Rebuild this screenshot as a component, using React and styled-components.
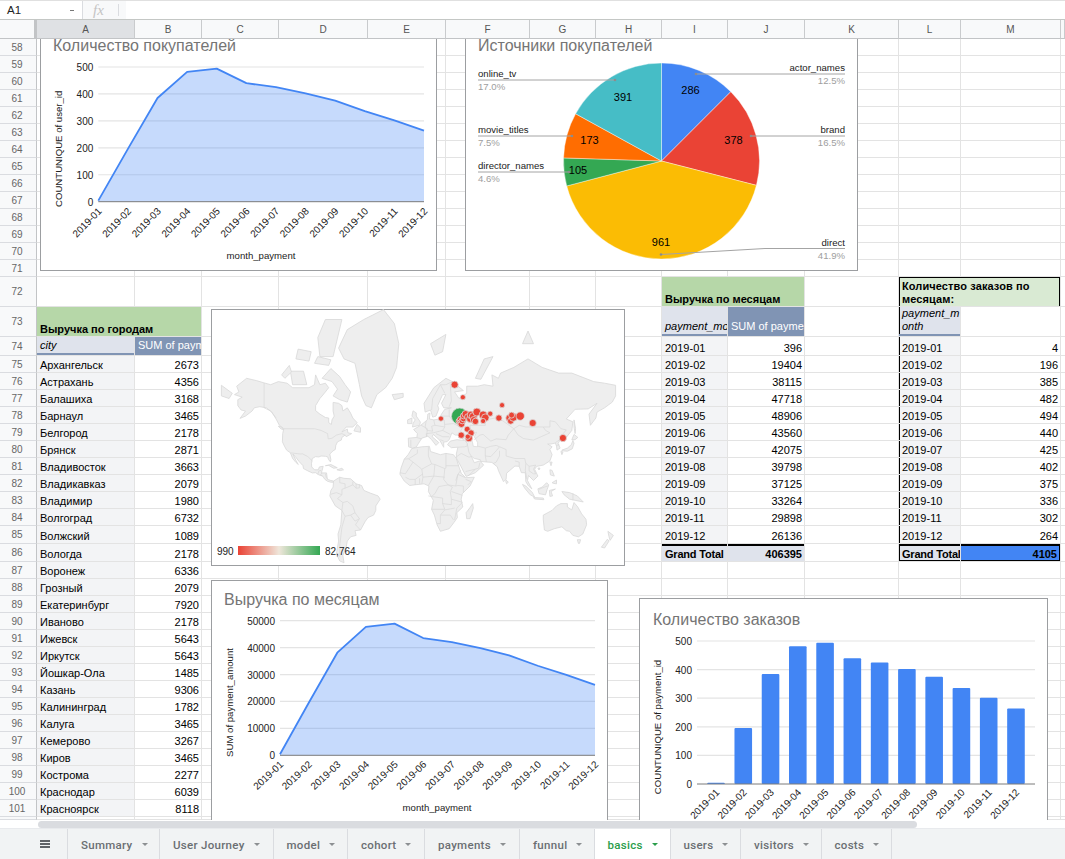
import React from "react";
import styled, { createGlobalStyle } from "styled-components";

const GlobalStyle = createGlobalStyle`
  html, body { margin: 0; padding: 0; background: #fff; }
  body { font-family: "Liberation Sans", Arial, sans-serif; }
`;

const COLUMNS = [
  ["A", 98], ["B", 67], ["C", 77], ["D", 89], ["E", 78], ["F", 84], ["G", 66],
  ["H", 66], ["I", 66], ["J", 77], ["K", 94], ["L", 62], ["M", 100], ["N", 4],
];
const TRACKS = `37px ${COLUMNS.map(c => c[1] + "px").join(" ")}`;

const rowHeight = n => {
  if (n === 72 || n === 73) return 30;
  if (n === 74) return 19;
  if (n === 85 || n === 86) return 18;
  if (n === 102) return 3;
  return 17;
};
const ROWS = Array.from({ length: 45 }, (_, i) => 58 + i);

const CITIES = [
  ["Архангельск", 2673], ["Астрахань", 4356], ["Балашиха", 3168], ["Барнаул", 3465],
  ["Белгород", 2178], ["Брянск", 2871], ["Владивосток", 3663], ["Владикавказ", 2079],
  ["Владимир", 1980], ["Волгоград", 6732], ["Волжский", 1089], ["Вологда", 2178],
  ["Воронеж", 6336], ["Грозный", 2079], ["Екатеринбург", 7920], ["Иваново", 2178],
  ["Ижевск", 5643], ["Иркутск", 5643], ["Йошкар-Ола", 1485], ["Казань", 9306],
  ["Калининград", 1782], ["Калуга", 3465], ["Кемерово", 3267], ["Киров", 3465],
  ["Кострома", 2277], ["Краснодар", 6039], ["Красноярск", 8118],
];
const MONTHS = ["2019-01", "2019-02", "2019-03", "2019-04", "2019-05", "2019-06", "2019-07", "2019-08", "2019-09", "2019-10", "2019-11", "2019-12"];
const REVENUE = [396, 19404, 38115, 47718, 48906, 43560, 42075, 39798, 37125, 33264, 29898, 26136];
const ORDERS = [4, 196, 385, 482, 494, 440, 425, 402, 375, 336, 302, 264];

// every filled cell of the sheet, keyed by address
const buildCells = () => {
  const c = {};
  c.A73 = { text: "Выручка по городам", kind: "banner", span: 2 };
  c.A74 = { text: "city", kind: "field", rule: true };
  c.B74 = { text: "SUM of payment_amount", kind: "measure", rule: true };
  CITIES.forEach(([name, sum], i) => {
    c[`A${75 + i}`] = { text: name, kind: "label" };
    c[`B${75 + i}`] = { text: sum, kind: "number" };
  });

  c.I72 = { text: "Выручка по месяцам", kind: "banner", span: 2 };
  c.I73 = { text: "payment_month", kind: "field", rule: true };
  c.J73 = { text: "SUM of payment_amount", kind: "measure", rule: true };
  MONTHS.forEach((m, i) => {
    c[`I${74 + i}`] = { text: m, kind: "label" };
    c[`J${74 + i}`] = { text: REVENUE[i], kind: "number" };
    c[`L${74 + i}`] = { text: m, kind: "label", frame: "l" };
    c[`M${74 + i}`] = { text: ORDERS[i], kind: "number" };
  });
  c.I86 = { text: "Grand Total", kind: "total", heavy: true };
  c.J86 = { text: 406395, kind: "totalNumber", heavy: true };

  c.L72 = { text: "Количество заказов по месяцам:", kind: "note", span: 2, frame: "tlr" };
  c.L73 = { text: "payment_month", kind: "fieldWrap", rule: true, frame: "l" };
  c.L86 = { text: "Grand Total", kind: "total", heavy: true, frame: "lb" };
  c.M86 = { text: 4105, kind: "accent", heavy: true, frame: "rb" };
  return c;
};
const CELLS = buildCells();

const KIND_STYLES = {
  banner: `background:#b6d7a8;font-weight:700;`,
  note: `background:#d9ead3;font-weight:700;white-space:normal;line-height:13px;letter-spacing:.1px;`,
  field: `background:#dfe3ec;font-style:italic;padding-bottom:3px;`,
  fieldWrap: `background:#dfe3ec;font-style:italic;white-space:normal;word-break:break-all;line-height:13px;padding:0 0 3px 3px;`,
  measure: `background:#8094b4;color:#fff;padding-bottom:3px;`,
  label: `background:#f3f4f6;`,
  number: `justify-content:flex-end;padding-right:2px;`,
  total: `background:#dfe3ec;font-weight:700;padding-right:0;letter-spacing:-.2px;`,
  totalNumber: `background:#dfe3ec;font-weight:700;justify-content:flex-end;padding-right:2px;`,
  accent: `background:#4285f4;font-weight:700;justify-content:flex-end;padding-right:3px;`,
};

const cellShadow = ({ $rule, $heavy, $frame = "" }) => {
  const s = [];
  if ($rule) s.push("inset 0 -2px 0 #8094b4");
  if ($heavy) s.push("inset 0 2px 0 #000");
  if ($frame.includes("t")) s.push("inset 0 1px 0 #000");
  if ($frame.includes("l")) s.push("inset 1px 0 0 #000");
  if ($frame.includes("r")) s.push("inset -1px 0 0 #000");
  if ($frame.includes("b")) s.push("inset 0 -1px 0 #000");
  return s.length ? `box-shadow:${s.join(",")};` : "";
};

const Page = styled.div`
  width: 1065px;
  height: 859px;
  display: flex;
  flex-direction: column;
  overflow: hidden;
  background: #fff;
  color: #000;
`;

const FormulaBar = styled.div`
  height: 20px;
  flex: none;
  box-sizing: border-box;
  display: flex;
  align-items: stretch;
  border-top: 1px solid #e0e0e0;
  border-bottom: 1px solid #c4c7c5;
  font-size: 11.5px;
`;

const NameBox = styled.div`
  width: 83px;
  box-sizing: border-box;
  padding: 0 7px;
  display: flex;
  align-items: center;
  justify-content: space-between;
  border-right: 1px solid #dadce0;
  color: #222;
`;

const NameCaret = styled.span`
  width: 4px;
  height: 1px;
  background: #777;
  margin-right: 1px;
`;

const FxBox = styled.div`
  width: 43px;
  box-sizing: border-box;
  padding-left: 10px;
  display: flex;
  align-items: center;
  background: #f8f9fa;
  color: #c4c4c4;
  font: italic 15px "Liberation Serif", serif;
  position: relative;
  &::after {
    content: "";
    position: absolute;
    right: 7px;
    top: 3px;
    bottom: 3px;
    width: 1px;
    background: #dadce0;
  }
`;

const HeaderRow = styled.div`
  flex: none;
  height: 19px;
  display: grid;
  grid-template-columns: ${TRACKS};
`;

const Corner = styled.div`
  background: #f8f9fa;
  border-right: 3px solid #c2c4c6;
  border-bottom: 1px solid #c2c4c6;
  box-sizing: border-box;
`;

const ColumnHead = styled.div`
  display: flex;
  align-items: center;
  justify-content: center;
  box-sizing: border-box;
  font-size: 10px;
  color: #555;
  background: ${p => (p.$selected ? "#dfe1e4" : "#f8f9fa")};
  border-right: 1px solid #c9cbcd;
  border-bottom: 1px solid #c2c4c6;
`;

const Body = styled.div`
  flex: none;
  height: 781px;
  position: relative;
  overflow: hidden;
`;

const SheetGrid = styled.div`
  display: grid;
  grid-template-columns: ${TRACKS};
  grid-template-rows: ${ROWS.map(n => rowHeight(n) + "px").join(" ")};
`;

const RowHead = styled.div`
  display: flex;
  align-items: center;
  justify-content: center;
  box-sizing: border-box;
  padding-right: 2px;
  font-size: 10px;
  color: #666;
  background: #f8f9fa;
  border-right: 1px solid #c2c4c6;
  border-bottom: 1px solid #dadce0;
`;

const Cell = styled.div`
  box-sizing: border-box;
  min-width: 0;
  overflow: hidden;
  display: flex;
  align-items: flex-end;
  padding: 0 3px;
  font-size: 11px;
  line-height: 14px;
  white-space: nowrap;
  border-right: 1px solid #e3e3e3;
  border-bottom: 1px solid #e3e3e3;
  grid-column: span ${p => p.$span || 1};
  ${p => KIND_STYLES[p.$kind] || ""}
  ${cellShadow}
`;

const ChartFrame = styled.div`
  position: absolute;
  left: ${p => p.$x}px;
  top: ${p => p.$y - 39}px;
  width: ${p => p.$w}px;
  height: ${p => p.$h}px;
  background: #fff;
  box-shadow: inset 0 0 0 1px #9c9ea1;
`;

const ChartCanvas = styled.svg`
  position: absolute;
  inset: 0;
  width: 100%;
  height: 100%;
  display: block;
`;

const ChartTitle = styled.text`
  font: 16px "Liberation Sans", Arial, sans-serif;
  fill: #757575;
`;

const AxisText = styled.text`
  font: 10px "Liberation Sans", Arial, sans-serif;
  fill: #222;
`;

const AxisTitle = styled.text`
  font: 9.6px "Liberation Sans", Arial, sans-serif;
  fill: #222;
  text-anchor: middle;
`;

const PieValue = styled.text`
  font: 11px "Liberation Sans", Arial, sans-serif;
  fill: #000;
  text-anchor: middle;
`;

const LegendName = styled.text`
  font: 9.6px "Liberation Sans", Arial, sans-serif;
  fill: #222;
`;

const LegendShare = styled.text`
  font: 9.6px "Liberation Sans", Arial, sans-serif;
  fill: #9e9e9e;
`;

const Track = styled.div`
  flex: none;
  height: 9px;
  box-sizing: border-box;
  padding: 1px 0 0 38px;
  background: #fff;
  border-bottom: 1px solid #e8eaed;
`;

const Thumb = styled.div`
  width: 879px;
  height: 7px;
  border-radius: 4px;
  background: #dadce0;
`;

const TabBar = styled.div`
  flex: 1;
  display: flex;
  align-items: stretch;
  background: #f1f3f4;
`;

const MenuButton = styled.div`
  width: 68px;
  box-sizing: border-box;
  border-right: 1px solid #dadce0;
  display: flex;
  flex-direction: column;
  align-items: center;
  justify-content: center;
  gap: 1px;
  padding-left: 22px;
  & > span {
    width: 10px;
    height: 2px;
    background: #5f6368;
  }
`;

const Tab = styled.div`
  box-sizing: border-box;
  width: ${p => p.$w}px;
  padding: 1px 0 0 13px;
  display: flex;
  align-items: center;
  gap: 9px;
  border-right: 1px solid #dadce0;
  font: 500 11.5px Roboto, "Liberation Sans", sans-serif;
  letter-spacing: 0.3px;
  color: ${p => (p.$active ? "#2a9d4a" : "#6a6e72")};
  background: ${p => (p.$active ? "#fff" : "transparent")};
  white-space: nowrap;
`;

const TabCaret = styled.span`
  width: 0;
  height: 0;
  border-left: 3.5px solid transparent;
  border-right: 3.5px solid transparent;
  border-top: 3.5px solid currentColor;
  opacity: ${p => (p.$active ? 1 : 0.75)};
`;

const range = (a, b, n) => Array.from({ length: n }, (_, i) => a + ((b - a) * i) / (n - 1));

const Frame = ({ x, y, w, h, title, titleX, titleY, children }) => (
  <ChartFrame $x={x} $y={y} $w={w} $h={h}>
    <ChartCanvas viewBox={`${x} ${y} ${w} ${h}`}>
      {title && <ChartTitle x={titleX} y={titleY}>{title}</ChartTitle>}
      {children}
    </ChartCanvas>
  </ChartFrame>
);

const Axes = ({ plot, ticks, max, yLabel, yLabelX, xLabel, xLabelX, xLabelY, labelXs, labelDx, labelDy, angle }) => {
  const toY = v => plot.bottom - (v / max) * (plot.bottom - plot.top);
  return (
    <g>
      {ticks.map(t => (
        <g key={t}>
          {t > 0 && <line x1={plot.left} x2={plot.right} y1={toY(t)} y2={toY(t)} stroke="#e4e4e4" strokeWidth="1.2" />}
          <AxisText x={plot.left - 5} y={toY(t) + 4} textAnchor="end">{t}</AxisText>
        </g>
      ))}
      <AxisTitle transform={`translate(${yLabelX} ${(plot.top + plot.bottom) / 2 + 14.5}) rotate(-90)`}>
        {yLabel}
      </AxisTitle>
      {MONTHS.map((m, i) => (
        <AxisText
          key={m}
          textAnchor="end"
          transform={`translate(${labelXs[i] + labelDx} ${plot.bottom + labelDy}) rotate(${angle})`}
        >
          {m}
        </AxisText>
      ))}
      {xLabel && <AxisTitle x={xLabelX} y={xLabelY}>{xLabel}</AxisTitle>}
    </g>
  );
};

const AreaChart = ({ frame, plot, data, max, ticks, ...axes }) => {
  const xs = range(plot.left, plot.right, 12);
  const pts = data.map((v, i) => `${xs[i]},${plot.bottom - (v / max) * (plot.bottom - plot.top)}`);
  return (
    <Frame {...frame}>
      <Axes plot={plot} ticks={ticks} max={max} labelXs={xs} {...axes} />
      <polygon
        points={`${plot.left},${plot.bottom} ${pts.join(" ")} ${plot.right},${plot.bottom}`}
        fill="#4285f4"
        fillOpacity="0.3"
      />
      <polyline points={pts.join(" ")} fill="none" stroke="#4285f4" strokeWidth="1.8" strokeLinejoin="round" />
      <line x1={plot.left} x2={plot.right} y1={plot.bottom} y2={plot.bottom} stroke="#7b7b7b" />
    </Frame>
  );
};

const BarChart = ({ frame, plot, data, max, ticks, ...axes }) => {
  const centers = data.map((_, i) => 716 + i * 27.27);
  return (
    <Frame {...frame}>
      <Axes plot={plot} ticks={ticks} max={max} labelXs={centers} {...axes} />
      {data.map((v, i) => {
        const h = (v / max) * (plot.bottom - plot.top);
        return <rect key={i} x={centers[i] - 8.8} y={plot.bottom - h} width="17.6" height={h} rx="1" fill="#4285f4" />;
      })}
      <line x1={plot.left} x2={plot.right} y1={plot.bottom} y2={plot.bottom} stroke="#7b7b7b" />
    </Frame>
  );
};

const PIE = { cx: 661.5, cy: 161, r: 98 };
const SLICES = [
  { share: 12.5, color: "#4285f4", value: 286, vx: 690.5, vy: 94, name: "actor_names", pct: "12.5%", right: true, line: [[696, 74], [845, 74]] },
  { share: 16.5, color: "#ea4335", value: 378, vx: 733.5, vy: 144, name: "brand", pct: "16.5%", right: true, line: [[751, 136], [845, 136]] },
  { share: 41.9, color: "#fbbc04", value: 961, vx: 661, vy: 246, name: "direct", pct: "41.9%", right: true, line: [[661, 254.5], [765, 248.5], [845, 248.5]] },
  { share: 4.6, color: "#34a853", value: 105, vx: 578, vy: 174, name: "director_names", pct: "4.6%", line: [[569, 172], [478, 172]] },
  { share: 7.5, color: "#ff6d01", value: 173, vx: 589.5, vy: 144, name: "movie_titles", pct: "7.5%", line: [[572, 136], [478, 136]] },
  { share: 17.0, color: "#46bdc6", value: 391, vx: 623, vy: 100.5, name: "online_tv", pct: "17.0%", line: [[615, 80], [478, 80]] },
];

const slicePath = (from, to) => {
  const p = s => {
    const a = (s / 100) * 2 * Math.PI - Math.PI / 2;
    return `${PIE.cx + PIE.r * Math.cos(a)} ${PIE.cy + PIE.r * Math.sin(a)}`;
  };
  return `M${PIE.cx} ${PIE.cy}L${p(from)}A${PIE.r} ${PIE.r} 0 ${to - from > 50 ? 1 : 0} 1 ${p(to)}Z`;
};

const PieChart = ({ frame }) => {
  let at = 0;
  return (
    <Frame {...frame}>
      {SLICES.map(s => {
        const d = slicePath(at, at + s.share);
        at += s.share;
        return <path key={s.name} d={d} fill={s.color} stroke="#fff" strokeWidth="0.4" />;
      })}
      {SLICES.map(s => {
        const end = s.line[s.line.length - 1];
        const anchor = s.right ? "end" : "start";
        return (
          <g key={s.name}>
            <PieValue x={s.vx} y={s.vy}>{s.value}</PieValue>
            <polyline points={s.line.map(p => p.join(",")).join(" ")} fill="none" stroke="#a4a4a4" />
            <circle cx={s.line[0][0]} cy={s.line[0][1]} r="1.3" fill="#8c8c8c" />
            <LegendName x={end[0]} y={end[1] - 3} textAnchor={anchor}>{s.name}</LegendName>
            <LegendShare x={end[0]} y={end[1] + 10} textAnchor={anchor}>{s.pct}</LegendShare>
          </g>
        );
      })}
    </Frame>
  );
};

// mercator, calibrated on the sheet's map chart
const px = lon => 418.5 + 1.095 * lon;
const py = lat => 490.4 - 62.7 * Math.log(Math.tan(Math.PI / 4 + (lat * Math.PI) / 360));
const project = pts => pts.map(([lon, lat]) => `${px(lon).toFixed(1)},${py(lat).toFixed(1)}`).join(" ");

const LAND = [
  [[-168,65.5],[-164,66.5],[-166,68.5],[-157,71],[-148,70.3],[-141,69.6],[-135,69],[-128,70],[-120,69.5],[-115,68],[-108,68],[-100,68],[-95,69],[-94,72],[-90,69],[-85,69.5],[-82,68],[-86,66],[-90,64],[-94,61],[-94,58.7],[-90,57],[-85,55.3],[-82,55],[-82,52.5],[-79.5,51.5],[-79,54],[-77,56],[-78,58.5],[-78,62.4],[-73,62],[-70,61],[-69,58.5],[-65,60],[-62,57.5],[-60,55],[-56,52.5],[-60,50],[-66,50],[-70,47],[-65,48.8],[-64.5,46.5],[-61,46],[-66,44],[-67,45],[-70,43.5],[-70.5,41.7],[-74,40.5],[-75.5,38],[-76,35],[-78,34],[-81,31.5],[-80,27],[-80.5,25.2],[-82,27],[-83,29.3],[-85,29.7],[-89,30],[-91,29.2],[-94,29.5],[-97,28],[-97.7,24],[-97.5,21],[-95,18.5],[-91.5,18.5],[-90.5,21],[-87,21.5],[-88,18],[-88.8,15.8],[-84,15.8],[-83.5,12],[-83,10],[-80,9],[-77.5,8.6],[-78,7.5],[-80,7.5],[-83,8.3],[-85.5,10],[-87.5,13],[-91,14],[-94,16],[-97,15.8],[-101,17.5],[-105,19.5],[-105.5,22],[-109,25.5],[-112.5,29.5],[-114.7,31.5],[-112,26.5],[-109.8,23],[-112,24.8],[-115,28],[-117,32.5],[-120.5,34.5],[-122.5,37.5],[-124.3,40.5],[-124,46],[-123,49],[-127,51],[-130,54.5],[-134,58],[-139,60],[-145,60.5],[-150,60],[-152,58.5],[-158,56],[-163,54.8],[-158,58.5],[-162,59],[-165,61],[-165,63.5],[-161,64.5]],
  [[-73,78.2],[-65,81.2],[-50,82.5],[-32,83.6],[-22,82],[-18,79],[-20,74],[-24,71],[-30,68],[-38,65.5],[-43,60],[-48,61],[-52,65],[-54,69],[-58,75],[-68,76]],
  [[-80,73.7],[-72,71.5],[-67,69],[-62,66.5],[-65,62.5],[-72,63.5],[-78,65],[-74,67.5],[-79,70],[-88,71]],
  [[-117,73],[-105,73],[-102,69],[-115,69]],
  [[-90,76.5],[-78,76.5],[-70,82.5],[-85,82.5],[-92,80]],
  [[-125,72],[-118,74.5],[-116,72.8],[-122,71]],
  [[-95,75],[-82,74.5],[-80,75.8],[-92,76.5]],
  [[-112,76],[-100,75.5],[-98,77.5],[-110,78]],
  [[-59,47.7],[-53,46.8],[-53,49.5],[-56,51.5]],
  [[-85,22],[-80,23],[-74.2,20.2],[-77.5,19.9],[-82,22.3]],
  [[-74.5,18.5],[-70,19.8],[-68.5,18.5],[-71.5,17.8]],
  [[-128,50.5],[-125,50],[-123.5,48.5],[-125.5,48.8]],
  [[-77.5,8.6],[-72,12],[-68,11],[-62,10.5],[-57,6],[-52,4.5],[-50,0],[-44,-2.5],[-37,-5],[-35,-8],[-39,-14],[-39,-18],[-41,-22],[-46,-24],[-48.5,-27],[-53,-34],[-58,-34.5],[-57,-38],[-62,-39],[-65,-42],[-66,-46],[-69,-51],[-68,-55],[-72,-54],[-75,-50],[-73,-42],[-73.5,-37],[-71,-30],[-70,-18],[-76,-14],[-81,-5],[-80,0],[-78,3]],
  [[-6,35.8],[3,37],[10,37.3],[11,33.5],[20,31],[25,32],[32,31],[34.5,28],[37,21],[39,15.5],[43,11.5],[51,12],[47,4],[40,-3],[39,-8],[40.5,-15],[35,-20],[35.5,-24],[32.5,-28],[28,-33],[20,-35],[17,-30],[14.5,-22],[12,-17],[13.5,-9],[9,-1],[9.5,4],[5,6],[-4,5],[-8,4.5],[-13,8.5],[-17,14.7],[-16,20],[-13,27.5],[-9.5,31]],
  [[-9,37],[-9.3,43],[-1.5,43.5],[-1,46],[-4.5,48.5],[2,51],[8,54],[8.5,57],[10.5,57.5],[10,54.5],[14,54],[19,54.5],[21,57],[24,59.3],[30,60],[23,60],[21,62],[25,65.5],[22,65.5],[17.5,61],[18.5,59.5],[16,56],[13,55.5],[11,59],[6,58],[5,62],[14,68],[25,71],[31,70],[41,67],[33,66.5],[37,64],[44,66],[44,68.5],[54,68.5],[60,69],[68,68.5],[67,72],[73,71],[75,72.5],[87,74],[100,76],[113,74],[128,72.5],[140,72.5],[160,70],[170,69.5],[180,68.8],[180,65],[177,62.5],[170,60],[163,58],[162,55],[157,51],[155.7,57],[163,62],[155,59.5],[143,59.3],[135,54.5],[141,53],[140,48],[135,43.5],[130,42.5],[127.5,39.5],[129.3,36],[126.5,34.5],[126,37.5],[125,39.7],[121,39],[118,39],[122,37],[120,35],[122,31],[120,26],[114,22.5],[108,21.5],[106,19],[109,13],[105,9],[100.5,13.5],[99.5,9],[103.5,1.5],[100.5,4],[98,8],[97.5,16],[94,16],[92,21.5],[88,21.7],[80.5,15.5],[80,10],[77.5,8],[73,18],[72,21],[67,24.8],[57,25.5],[56.5,27],[51,28],[48,30],[51,24.5],[56,26],[59.5,22.5],[52,16],[43.5,12.7],[39,21],[34.8,28],[34.5,31.5],[36,36.7],[30,36.3],[26.5,38.5],[29,41],[35,42],[41.5,41.5],[37,45],[33.5,45],[30.5,46.5],[28,42],[26,40.7],[23,40.3],[23,36.6],[19.5,41.5],[13.5,45.5],[12.5,44],[18.5,40],[16,38],[12,42],[8.5,44.3],[3,43],[0,39.5],[-2,36.8],[-5.5,36]],
  [[-180,68.8],[-170,66],[-173,64],[-180,65]],
  [[-5.5,50],[1,51],[1.7,52.8],[-2,56],[-2,57.6],[-5,58.6],[-6,56],[-3,54],[-5,52]],
  [[-10,52],[-6,52],[-6,55],[-10,54]],
  [[-24,65.5],[-14,66],[-14,64.5],[-22,63.5]],
  [[11,79],[25,80.5],[22,77.5],[15,76.8]],
  [[52,71],[57,70.7],[68,76.5],[60,76]],
  [[95,79],[105,79],[100,81]],
  [[142,54],[143.5,49],[143,46],[142,50]],
  [[131,34],[136,33.7],[140.5,35.5],[142,39.5],[141,41.5],[139.5,38.5],[136,36],[131,34.5]],
  [[140,42],[143,42],[145.5,43.5],[142,45.5]],
  [[130,33.5],[132,33],[131,31]],
  [[120,25],[122,25],[121,22]],
  [[109,20],[111,20],[110,18.3]],
  [[80,9.5],[82,7.5],[80.5,6],[79.7,8]],
  [[49.5,-12],[50,-16],[47,-25],[44,-25],[43.5,-20],[47,-15.5]],
  [[95,5.5],[98,4],[104,-2],[106,-6],[102,-4],[97,2]],
  [[105,-6.5],[114,-7],[114.5,-8.5],[106,-7.8]],
  [[109,1.5],[113,3],[117,7],[119,5],[117.5,1],[116,-4],[110,-3]],
  [[119.5,0],[125,1.3],[121,-1],[122.5,-5],[120,-5.5]],
  [[131,-1],[138,-2],[145,-5],[150.5,-10.5],[143,-9],[138,-8],[133,-4]],
  [[120,18.5],[122,18],[124,13],[120.5,14]],
  [[122,7],[126,9.5],[126,6],[123,6.5]],
  [[114,-22],[122,-18],[126,-14],[130,-12],[136,-12],[136,-15],[140,-17.5],[142,-11],[145.5,-15],[149,-21],[153,-25.5],[153.5,-30],[150,-37],[146,-39],[141,-38],[138,-35],[135,-34.5],[131,-31.5],[124,-33],[118,-35],[115,-34],[114,-26]],
  [[145,-41],[148,-41],[147,-43.5],[146,-43.5]],
  [[173,-35],[178,-38],[175,-41.5],[174,-39]],
  [[172.5,-40.7],[174,-42],[170,-46.5],[167,-46]],
];

const LAKES = [[[47,45],[53,46.8],[51,44],[54,40],[54,37],[50,37.3],[49,41]]];

const BORDERS = [
  [[-123,49],[-95,49],[-89,48],[-83,46],[-82.5,42.5],[-79,43],[-75,45],[-70,46],[-67,45]],
  [[-141,69.6],[-141,60],[-135,58.5],[-130,55]],
  [[-117,32.5],[-108,31.5],[-106,31.7],[-101,29.5],[-97,26]],
  [[-92,14.5],[-91,17.5],[-89,18]],[[-88,15.8],[-89.5,14],[-87.5,13]],[[-85,15],[-84,11]],
  [[-70,-18],[-69,-11],[-74,-7.5],[-70,-4],[-70,1],[-67,2],[-60,5]],
  [[-69,-11],[-65,-10],[-60,-14],[-58,-20],[-54,-25],[-57.5,-30],[-53,-34]],
  [[-70,-18],[-67,-23],[-70,-32],[-72,-45],[-72,-52]],
  [[-67,-23],[-62,-22],[-58,-20]],[[-62,-22],[-58,-27],[-54,-25]],
  [[-72,12],[-72,7],[-67,6],[-67,2]],[[-80,-3.5],[-75,-2],[-70,-4]],
  [[-60,8],[-60,5],[-57,2]],[[-57,6],[-57,2],[-54,2.3],[-54,5.5]],
  [[-1,35],[-1,32],[-9,27.7],[-13,27.5]],[[9,37],[9,30],[12,23.5],[3,19],[-5,25],[-9,27.7]],
  [[25,32],[25,20],[24,19.5],[15,23],[12,23.5]],[[25,22],[37,22]],
  [[24,19.5],[23,10],[27,5],[34,4],[36,14.5],[38.5,18]],[[15,23],[14,13],[24,12]],
  [[3,19],[4,12],[14,13]],[[-5,25],[-12,15],[-17,16]],[[4,15],[-3,10],[-8,10],[-12,12]],
  [[3,6],[4,12]],[[14,13],[9,4.5]],[[-3,5],[-3,10]],[[1,6],[1,11]],
  [[9,-5],[12.5,-5.7],[22,-7],[22,-12],[30,-13],[30,-8],[29,-1],[31,3],[27,5],[18.5,3.5],[15,-3],[12.5,-5]],
  [[34,9],[36,14.5],[43,11.5]],[[41,-2],[41,4],[36,4.5],[34,4]],[[45,5],[48,8],[43,10]],
  [[30,-1],[40,-4.5]],[[30,-8],[40,-10.7]],[[12,-17],[24,-17],[22,-12]],
  [[20,-29],[20,-22],[24,-17.5],[33,-16]],[[20,-22],[29,-22],[32,-26]],[[17,-29],[20,-29]],[[40,-11],[35,-16],[33,-26]],
  [[-1.5,43.4],[3,42.5]],[[-7,37],[-7,42]],[[2.5,51],[8,49],[7.5,44]],
  [[7,53.5],[6,50],[8,48],[13,47.5],[12,50.5],[15,51],[14,54]],
  [[15,51],[24,50],[23.5,54],[19,54.5]],[[7.5,44],[7,46],[13.5,46.5]],
  [[24,50],[22,48],[29,45.5]],[[24,51.5],[32,52],[40,49.5],[38,47]],[[21,56],[28,56],[28,59.3]],[[28,56],[32,53]],
  [[13.5,46.5],[22,48]],[[16,46],[22,44],[28,44]],[[20,42],[23,41]],
  [[12,59],[13,64],[20,69],[25,69],[31,70]],[[24,66],[20,69]],[[28,60.5],[30,63],[29,69],[31,70]],
  [[48,46],[47,51],[55,51],[61,51],[61,54],[70,55],[77,53.5],[87,49]],
  [[87,49],[92,51],[98,50],[106,50],[114,50],[120,50],[120,53.5],[125,53],[130,49],[135,48.3],[131,45],[130.5,42.7]],
  [[87,49],[91,45],[96,42.7],[105,41.7],[112,44],[120,46.5],[116,48],[114,50]],
  [[51,42],[56,45],[59,45.5],[66,41],[71,42.5],[80,42],[82,45],[87,49]],
  [[54,37.5],[61,36],[66,37.3],[71,38],[74,37],[80,35],[80,30],[88,28],[97,28],[98,24],[101,21.5],[107,22.5]],
  [[61,36],[61,30],[66,29.5],[71,34],[74,37]],[[44.5,39.5],[46,33],[48,30]],[[61,30],[62,25.3]],
  [[74,34],[74,30],[71,25],[68,23.8]],[[36,36.7],[42,37],[44.5,37.5],[44.5,39.5],[42,41.5]],
  [[35,29.5],[39,32],[46,29],[48,29.5]],[[43,17],[52,19],[55,20],[56,24.5]],[[45,13],[52,19]],
  [[98,24],[97.5,18],[99,10]],[[101,21.5],[101,17.5],[105,15],[107,15],[105,19],[107,22.5]],
  [[125,40],[130.5,42.7]],[[126,38],[128.5,38.5]],[[141,-2.5],[141,-9]],[[110,1],[115,3],[118,4]],
  [[40,43.5],[48,41.8]],[[88,26],[92,25],[92,21.5]],
];

// lat, lon, radius
const DOTS = [
  [69, 33, 3.6], [64.5, 40.5, 2.6], [54.7, 20.5, 2.6], [61.2, 76.3, 2.6],
  [53.25, 37, 3], [54.2, 38.4, 3.2], [52.3, 38, 3], [51.7, 39.2, 3.4], [53.6, 40, 3.2],
  [54.6, 41, 3], [56.1, 41, 3], [57, 43, 3.6], [55.6, 45, 3.2], [54.5, 47, 3.4],
  [56.6, 47.9, 3.8], [55.8, 50, 4], [54, 50.5, 3.4], [53.2, 52, 3.2],
  [58, 53.3, 4], [56.6, 59, 4], [55.2, 61, 3.8], [57.2, 65.5, 2.6], [53.4, 59, 2.6],
  [55, 73.4, 3.2], [55, 83, 3.6], [53.4, 84.2, 3.2], [55.35, 86.6, 4], [56.5, 85, 3],
  [56, 92.9, 4.2], [52.3, 104.3, 3.6], [43.1, 131.9, 3.6],
  [48.7, 44.5, 3], [46.35, 48, 3.2], [45, 39, 3.2], [43, 46, 3.6], [44, 45, 2.6],
];

const MapChart = ({ frame }) => (
  <Frame {...frame}>
    {LAND.map((pts, i) => (
      <polygon key={i} points={project(pts)} fill="#eeeeee" stroke="#d8d8d8" strokeWidth="0.8" strokeLinejoin="round" />
    ))}
    {LAKES.map((pts, i) => <polygon key={i} points={project(pts)} fill="#fff" stroke="#d8d8d8" strokeWidth="0.7" />)}
    {BORDERS.map((pts, i) => <polyline key={i} points={project(pts)} fill="none" stroke="#d8d8d8" strokeWidth="0.7" />)}
    <circle cx={px(37.6)} cy={py(55.9)} r="8.2" fill="#34a853" stroke="#d5d5d5" strokeWidth="0.7" />
    {DOTS.map(([lat, lon, r], i) => (
      <circle key={i} cx={px(lon)} cy={py(lat)} r={r} fill="#ea4335" stroke="#dcdcdc" strokeWidth="0.8" />
    ))}
    <defs>
      <linearGradient id="revenueScale">
        <stop offset="0" stopColor="#ea4335" />
        <stop offset="0.5" stopColor="#efe6da" />
        <stop offset="1" stopColor="#34a853" />
      </linearGradient>
    </defs>
    <AxisText x="217" y="555">990</AxisText>
    <rect x="238" y="546" width="82" height="9" fill="url(#revenueScale)" />
    <AxisText x="325" y="555">82,764</AxisText>
  </Frame>
);

const TABS = [
  ["Summary", 92], ["User Journey", 113.5], ["model", 74.5], ["cohort", 77], ["payments", 95],
  ["funnul", 74.5], ["basics", 76, true], ["users", 70.5], ["visitors", 80.5], ["costs", 70],
];

export default function App() {
  return (
    <Page>
      <GlobalStyle />
      <FormulaBar>
        <NameBox>
          A1
          <NameCaret />
        </NameBox>
        <FxBox>fx</FxBox>
      </FormulaBar>

      <HeaderRow>
        <Corner />
        {COLUMNS.map(([name], i) => (
          <ColumnHead key={name} $selected={i === 0}>{name === "N" ? "" : name}</ColumnHead>
        ))}
      </HeaderRow>

      <Body>
        <SheetGrid>
          {ROWS.map(n => {
            let skip = 0;
            return (
              <React.Fragment key={n}>
                <RowHead>{n < 102 ? n : ""}</RowHead>
                {COLUMNS.map(([col]) => {
                  if (skip > 0) {
                    skip -= 1;
                    return null;
                  }
                  const c = CELLS[`${col}${n}`] || {};
                  if (c.span) skip = c.span - 1;
                  return (
                    <Cell
                      key={col}
                      $kind={c.kind}
                      $span={c.span}
                      $rule={c.rule}
                      $heavy={c.heavy}
                      $frame={c.frame}
                    >
                      {c.text}
                    </Cell>
                  );
                })}
              </React.Fragment>
            );
          })}
        </SheetGrid>

        <AreaChart
          frame={{ x: 40, y: 26, w: 397, h: 245, title: "Количество покупателей", titleX: 53, titleY: 51 }}
          plot={{ left: 98.3, right: 424, top: 67, bottom: 201.7 }}
          data={ORDERS}
          max={500}
          ticks={[0, 100, 200, 300, 400, 500]}
          yLabel="COUNTUNIQUE of user_id"
          yLabelX={62}
          xLabel="month_payment"
          xLabelX={261}
          xLabelY={259}
          labelDx={4}
          labelDy={10}
          angle={-46}
        />
        <PieChart frame={{ x: 465, y: 26, w: 393, h: 245, title: "Источники покупателей", titleX: 478, titleY: 51 }} />
        <MapChart frame={{ x: 211, y: 309, w: 414, h: 257 }} />
        <AreaChart
          frame={{ x: 211, y: 580, w: 397, h: 260, title: "Выручка по месяцам", titleX: 224, titleY: 605 }}
          plot={{ left: 280, right: 595, top: 620.7, bottom: 755.3 }}
          data={REVENUE}
          max={50000}
          ticks={[0, 10000, 20000, 30000, 40000, 50000]}
          yLabel="SUM of payment_amount"
          yLabelX={233}
          xLabel="month_payment"
          xLabelX={437}
          xLabelY={811}
          labelDx={4}
          labelDy={10}
          angle={-43}
        />
        <BarChart
          frame={{ x: 639, y: 598, w: 409, h: 250, title: "Количество заказов", titleX: 653, titleY: 625 }}
          plot={{ left: 697, right: 1035, top: 641, bottom: 784 }}
          data={ORDERS}
          max={500}
          ticks={[0, 100, 200, 300, 400, 500]}
          yLabel="COUNTUNIQUE of payment_id"
          yLabelX={661}
          labelDx={4}
          labelDy={9}
          angle={-46}
        />
      </Body>

      <Track>
        <Thumb />
      </Track>

      <TabBar>
        <MenuButton>
          <span />
          <span />
          <span />
        </MenuButton>
        {TABS.map(([name, w, active]) => (
          <Tab key={name} $w={w} $active={active}>
            {name}
            <TabCaret $active={active} />
          </Tab>
        ))}
      </TabBar>
    </Page>
  );
}
